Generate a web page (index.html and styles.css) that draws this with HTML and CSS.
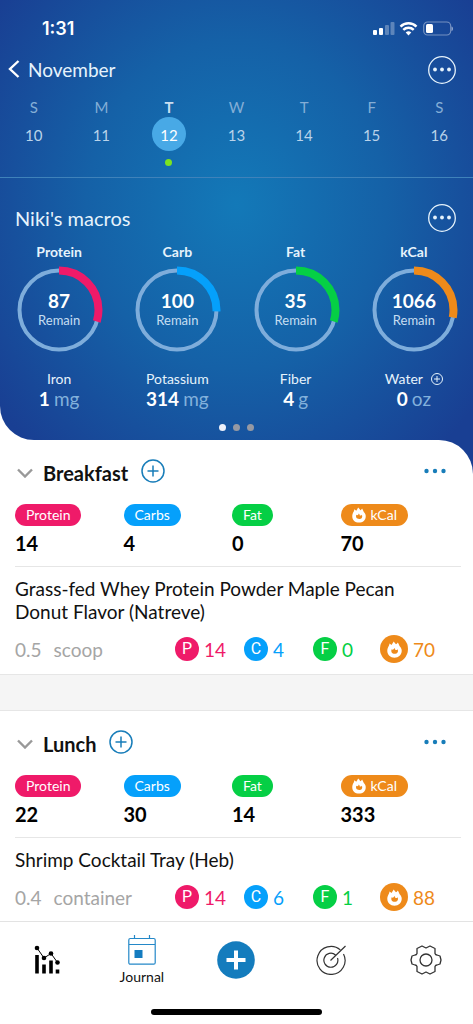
FILE: index.html
```html
<!DOCTYPE html>
<html lang="en">
<head>
<meta charset="utf-8">
<meta name="viewport" content="width=device-width, initial-scale=1">
<title>Journal</title>
<link rel="stylesheet" href="styles.css">
</head>
<body>
<svg class="defs" aria-hidden="true">
  <symbol id="flame" viewBox="0 0 16 18">
    <path fill="currentColor" d="M7 .5C8 1.500 9 2.500 9.500 3.500C10.500 3 11 2.500 11.500 1.500C12.500 3 13 4.500 13.500 5.500C15 7 15.700 8.500 15.700 10.300C15.700 14.700 12.400 17.700 8 17.700S.3 14.700 .3 10.300C.3 8.500 1 6.500 2 5C2.500 4 2.600 3.500 2.500 2.500C3.500 3 4.300 3.500 4.800 4.200C5.500 3 6.500 2 7 .5Z"/>
    <path class="flame-core" d="M5 8.800C6.200 9.600 7.300 9 7.700 7.300C8.600 8 9 8.700 8.900 9.500C9.800 9.700 10.700 9.400 11.300 8.600C12.500 11.500 10.800 13.600 8.200 13.600C5.200 13.600 3.900 11.300 5 8.800Z"/>
  </symbol>
  <symbol id="more" viewBox="0 0 28 28">
    <circle cx="14" cy="14" r="13.300" fill="none" stroke="currentColor" stroke-width="1.300"/>
    <circle cx="7" cy="13.500" r="1.900" fill="currentColor"/><circle cx="14" cy="13.500" r="1.900" fill="currentColor"/><circle cx="21" cy="13.500" r="1.900" fill="currentColor"/>
  </symbol>
  <symbol id="plus" viewBox="0 0 24 24">
    <path d="M12 6.500v11M6.500 12h11" fill="none" stroke="currentColor" stroke-width="1.500"/>
    <circle cx="12" cy="12" r="11" fill="none" stroke="currentColor" stroke-width="1.500"/>
  </symbol>
  <symbol id="dots" viewBox="0 0 22 6">
    <circle cx="2.500" cy="3" r="2.200" fill="currentColor"/><circle cx="11" cy="3" r="2.200" fill="currentColor"/><circle cx="19.500" cy="3" r="2.200" fill="currentColor"/>
  </symbol>
  <symbol id="chevron" viewBox="0 0 16 10">
    <path d="M1 1.500l7 7 7-7" fill="none" stroke="currentColor" stroke-width="2.400"/>
  </symbol>
</svg>

<div class="app">
  <header class="hero">
    <div class="status">
      <span class="time">1:31</span>
      <svg class="signals" viewBox="0 0 82 16" aria-hidden="true">
        <g fill="#fff">
          <rect x="0" y="9" width="4" height="5" rx="1"/><rect x="6" y="7" width="4" height="7" rx="1"/>
          <rect x="12" y="4" width="4" height="10" rx="1" opacity=".3"/><rect x="17.500" y="1" width="4" height="13" rx="1" opacity=".3"/>
          <path d="M35.500 14.500l-2.800-3a4.200 4.200 0 0 1 5.600 0z"/>
          <rect x="53" y="3" width="7" height="9" rx="1.500"/>
          <path d="M78.500 5.500c2 .5 2 4 0 4.500z" opacity=".5"/>
        </g>
        <g fill="none" stroke="#fff" stroke-width="2.500">
          <path d="M27.500 5.600a11.500 11.500 0 0 1 16 0M30.300 8.900a7.500 7.500 0 0 1 10.400 0"/>
          <rect x="50.700" y="1" width="27" height="13" rx="4" stroke-width="1.200" opacity=".4"/>
        </g>
      </svg>
    </div>
    <div class="month">
      <button class="icon-btn back" aria-label="Back"><svg width="12" height="20" viewBox="0 0 12 20"><path d="M10.500 1L2 9l8.500 8" fill="none" stroke="currentColor" stroke-width="2.400"/></svg></button>
      <h1 class="month-name">November</h1>
      <button class="icon-btn more" aria-label="More"><svg width="28" height="28"><use href="#more"/></svg></button>
    </div>
    <div class="week">
      <button class="day"><span class="dow">S</span><span class="num">10</span></button>
      <button class="day"><span class="dow">M</span><span class="num">11</span></button>
      <button class="day today"><span class="dow">T</span><span class="num">12</span></button>
      <button class="day"><span class="dow">W</span><span class="num">13</span></button>
      <button class="day"><span class="dow">T</span><span class="num">14</span></button>
      <button class="day"><span class="dow">F</span><span class="num">15</span></button>
      <button class="day"><span class="dow">S</span><span class="num">16</span></button>
    </div>
    <div class="macros-head">
      <h2 class="title">Niki's macros</h2>
      <button class="icon-btn more" aria-label="Macro options"><svg width="28" height="28"><use href="#more"/></svg></button>
    </div>
    <div class="macros">
      <div class="macro protein"><h3>Protein</h3>
        <div class="ring"><svg viewBox="0 0 88 88"><circle class="track" cx="44" cy="44" r="39.500"/><circle class="arc" cx="44" cy="44" r="39.500" pathLength="360" stroke-dasharray="107 360"/></svg><strong>87</strong><span>Remain</span></div>
        <div class="extra">Iron</div><div class="amount"><b>1</b><span>mg</span></div></div>
      <div class="macro carb"><h3>Carb</h3>
        <div class="ring"><svg viewBox="0 0 88 88"><circle class="track" cx="44" cy="44" r="39.500"/><circle class="arc" cx="44" cy="44" r="39.500" pathLength="360" stroke-dasharray="92 360"/></svg><strong>100</strong><span>Remain</span></div>
        <div class="extra">Potassium</div><div class="amount"><b>314</b><span>mg</span></div></div>
      <div class="macro fat"><h3>Fat</h3>
        <div class="ring"><svg viewBox="0 0 88 88"><circle class="track" cx="44" cy="44" r="39.500"/><circle class="arc" cx="44" cy="44" r="39.500" pathLength="360" stroke-dasharray="107 360"/></svg><strong>35</strong><span>Remain</span></div>
        <div class="extra">Fiber</div><div class="amount"><b>4</b><span>g</span></div></div>
      <div class="macro kcal"><h3>kCal</h3>
        <div class="ring"><svg viewBox="0 0 88 88"><circle class="track" cx="44" cy="44" r="39.500"/><circle class="arc" cx="44" cy="44" r="39.500" pathLength="360" stroke-dasharray="101 360"/></svg><strong>1066</strong><span>Remain</span></div>
        <div class="extra">Water <button class="icon-btn" aria-label="Add water"><svg width="12" height="12" viewBox="0 0 12 12"><g fill="none" stroke="currentColor" stroke-width="1"><circle cx="6" cy="6" r="5.500"/><path d="M6 3v6M3 6h6"/></g></svg></button></div><div class="amount"><b>0</b><span>oz</span></div></div>
    </div>
    <div class="pager"><i class="on"></i><i></i><i></i></div>
  </header>

  <main class="meals">
    <section class="meal">
      <div class="meal-head">
        <button class="icon-btn fold" aria-label="Collapse"><svg width="16" height="10"><use href="#chevron"/></svg></button>
        <h2>Breakfast</h2>
        <button class="icon-btn add" aria-label="Add to breakfast"><svg width="24" height="24"><use href="#plus"/></svg></button>
        <button class="icon-btn dots" aria-label="Breakfast options"><svg width="22" height="6"><use href="#dots"/></svg></button>
      </div>
      <div class="totals">
        <div class="protein"><span class="pill">Protein</span><b>14</b></div>
        <div class="carb"><span class="pill">Carbs</span><b>4</b></div>
        <div class="fat"><span class="pill">Fat</span><b>0</b></div>
        <div class="kcal"><span class="pill"><svg width="14" height="16"><use href="#flame"/></svg>kCal</span><b>70</b></div>
      </div>
      <h3 class="food">Grass-fed Whey Protein Powder Maple Pecan Donut Flavor (Natreve)</h3>
      <div class="facts">
        <span class="serving"><span>0.5</span><span>scoop</span></span>
        <span class="fact protein"><i>P</i>14</span>
        <span class="fact carb"><i>C</i>4</span>
        <span class="fact fat"><i>F</i>0</span>
        <span class="fact kcal"><i><svg width="15" height="17"><use href="#flame"/></svg></i>70</span>
      </div>
    </section>
    <div class="gap"></div>
    <section class="meal">
      <div class="meal-head">
        <button class="icon-btn fold" aria-label="Collapse"><svg width="16" height="10"><use href="#chevron"/></svg></button>
        <h2>Lunch</h2>
        <button class="icon-btn add" aria-label="Add to lunch"><svg width="24" height="24"><use href="#plus"/></svg></button>
        <button class="icon-btn dots" aria-label="Lunch options"><svg width="22" height="6"><use href="#dots"/></svg></button>
      </div>
      <div class="totals">
        <div class="protein"><span class="pill">Protein</span><b>22</b></div>
        <div class="carb"><span class="pill">Carbs</span><b>30</b></div>
        <div class="fat"><span class="pill">Fat</span><b>14</b></div>
        <div class="kcal"><span class="pill"><svg width="14" height="16"><use href="#flame"/></svg>kCal</span><b>333</b></div>
      </div>
      <h3 class="food">Shrimp Cocktail Tray (Heb)</h3>
      <div class="facts">
        <span class="serving"><span>0.4</span><span>container</span></span>
        <span class="fact protein"><i>P</i>14</span>
        <span class="fact carb"><i>C</i>6</span>
        <span class="fact fat"><i>F</i>1</span>
        <span class="fact kcal"><i><svg width="15" height="17"><use href="#flame"/></svg></i>88</span>
      </div>
    </section>
  </main>

  <nav class="tabs">
    <div class="tab-row">
      <button class="tab" aria-label="Trends"><svg width="28" height="30" viewBox="0 0 28 30">
        <path d="M4 10v18.500M11 19.500v9M18 15.500v13M24.500 24.500v4" stroke="#000" stroke-width="3.600"/>
        <path d="M4 3l7 10 7-4.500 6.500 9" fill="none" stroke="#000" stroke-width="1"/>
        <circle cx="4" cy="3" r="2.300"/><circle cx="11" cy="13" r="2.300"/><circle cx="18" cy="8.500" r="2.300"/><circle cx="24.500" cy="17.500" r="2.300"/></svg></button>
      <button class="tab"><svg width="28" height="30" viewBox="0 0 28 30">
        <g fill="none" stroke="#2488c8" stroke-width="1.200"><rect x=".8" y="3.500" width="26.400" height="25.700" rx="1.500"/><path d="M1 9.500h26M6.500 0v3.500M21.500 0v3.500"/></g>
        <rect x="6.500" y="15" width="8" height="8" fill="#147cc0"/></svg>Journal</button>
      <button class="tab" aria-label="Add"><svg width="38" height="38" viewBox="0 0 38 38"><circle cx="19" cy="19" r="18.800" fill="#147cbd"/><path d="M19 9.500v19M9.500 19h19" stroke="#fff" stroke-width="4"/></svg></button>
      <button class="tab" aria-label="Goals"><svg width="30" height="30" viewBox="0 0 30 30"><g fill="none" stroke="#333" stroke-width="1.200">
        <path d="M24.300 4.900A14 14 0 1 0 27.500 9M19.500 10A7 7 0 1 0 21.500 13M14.500 15.500L29.500 1"/></g></svg></button>
      <button class="tab" aria-label="Settings"><svg width="32" height="30" viewBox="0 0 32 30"><g fill="none" stroke="#333" stroke-width="1.300" stroke-linejoin="round">
        <circle cx="16" cy="15" r="6"/>
        <path d="M12 1L16 3 20 1 25 3.500V8.500Q25.500 10 27 10L30 11 31 15 30 19 27 20Q25.500 20 25 21.500V26.500L20 29 16 27 12 29 7 26.500V21.500Q6.500 20 5 20L2 19 1 15 2 11 5 10Q6.500 10 7 8.500V3.500Z"/></g></svg></button>
    </div>
    <div class="home-bar"></div>
  </nav>
</div>
</body>
</html>
```
FILE: styles.css
```css
* { box-sizing: border-box; }

body {
  margin: 0;
  font-family: Lato, "Liberation Sans", sans-serif;
  color: #111;
  background: #fff;
}

h1, h2, h3 { margin: 0; font-weight: 400; }
button { font: inherit; color: inherit; background: none; border: 0; padding: 0; }
svg { display: block; }
.defs { width: 0; height: 0; position: absolute; }
.icon-btn { display: block; line-height: 0; }

.protein { --tone: #ef1a69; }
.carb { --tone: #05a0fb; }
.fat { --tone: #05cf45; }
.kcal { --tone: #ee8a1a; }

.app {
  min-height: 100vh;
  display: flex;
  flex-direction: column;
}

/* Header */
.hero {
  color: #e6f3fc;
  background: radial-gradient(ellipse 300px 330px at 50% 205px, #1379b8 0%, #1561a7 50%, #193f93 100%);
  border-bottom-left-radius: 34px;
}

.status {
  height: 50px;
  padding: 7px 18px 0 42px;
  display: flex;
  align-items: center;
  justify-content: space-between;
}
.time { font-family: Inter, sans-serif; font-size: 18px; font-weight: 600; color: #fff; }
.signals { width: 82px; height: 16px; }

.month {
  height: 40px;
  padding: 0 17px 0 8px;
  display: flex;
  align-items: center;
}
.month-name { font-size: 19px; line-height: 24px; }
.title { font-size: 20px; line-height: 24px; }
.back { color: #fff; margin-right: 8px; }
.more { margin-left: auto; }

.week {
  height: 88px;
  padding-top: 7px;
  display: grid;
  grid-template-columns: repeat(7, 1fr);
  border-bottom: 1px solid #3f82ba;
}
.day {
  display: flex;
  flex-direction: column;
  align-items: center;
  font-size: 15px;
  color: #b9d3ea;
}
.dow { line-height: 20px; color: #84aed6; }
.num {
  width: 34px;
  height: 34px;
  line-height: 36px;
  border-radius: 50%;
}
.today .dow { color: #c9def0; font-weight: 700; }
.today .num { background: #48a9e6; color: #fff; }
.today::after {
  content: "";
  width: 7px;
  height: 7px;
  margin-top: 8px;
  border-radius: 50%;
  background: #7be321;
}

.macros-head {
  height: 64px;
  padding: 16px 17px 0 15px;
  display: flex;
  align-items: center;
}

.macros {
  display: grid;
  grid-template-columns: repeat(4, 1fr);
  text-align: center;
}
.macro h3 { font-size: 14px; line-height: 20px; font-weight: 700; }
.ring {
  width: 88px;
  height: 88px;
  margin: 4px auto 0;
  padding-top: 24px;
  display: grid;
  align-content: start;
  position: relative;
}
.ring svg { position: absolute; inset: 0; transform: rotate(-90deg); }
.ring circle { fill: none; }
.track { stroke: #7eaddb; stroke-width: 4; }
.arc { stroke: var(--tone); stroke-width: 8; }
.ring strong { font-size: 19px; line-height: 22px; color: #fff; }
.ring span { font-size: 13px; line-height: 16px; color: #c6def2; }
.extra {
  margin-top: 15px;
  display: flex;
  justify-content: center;
  align-items: center;
  gap: 8px;
  font-size: 14px;
  line-height: 20px;
}
.amount {
  display: flex;
  justify-content: center;
  gap: 4px;
  font-size: 19px;
  line-height: 20px;
  color: #82b1dc;
}
.amount b { color: #fff; }

.pager { display: flex; justify-content: center; gap: 7px; padding: 15px 0 9px; }
.pager i { width: 7px; height: 7px; border-radius: 50%; background: #9699a3; }
.pager .on { background: #edf1fb; }

/* Meals */
.meals {
  flex: 1;
  background: linear-gradient(to right, #fff 50%, #193f93 50%) top / 100% 60px no-repeat;
}
.meal {
  padding: 15px 12px 11px 15px;
  background: #fff;
}
.meal:first-child { border-top-right-radius: 34px; }
.meal:last-child { padding-bottom: 10px; }
.gap {
  height: 37px;
  background: #f5f5f5;
  border: solid #e6e6e6;
  border-width: 1px 0;
}
.meal-head {
  height: 36px;
  padding: 0 15px 0 2px;
  display: flex;
  align-items: center;
}
.meal-head h2 { font-size: 20px; line-height: 24px; font-weight: 700; margin: 0 13px 0 10px; }
.fold { color: #999; }
.add, .dots { color: #187db9; padding-bottom: 5px; }
.dots { margin-left: auto; }

.totals {
  padding: 13px 12px 0 0;
  display: grid;
  grid-template-columns: repeat(4, 1fr);
  height: 76px;
  border-bottom: 1px solid #e6e6e6;
}
.totals b { display: block; font-size: 20px; line-height: 24px; margin-top: 5px; color: #000; }
.pill {
  display: inline-flex;
  align-items: center;
  gap: 5px;
  height: 22px;
  padding: 0 11px 1px;
  border-radius: 11px;
  background: var(--tone);
  color: #fff;
  font-size: 14px;
  vertical-align: top;
}
.flame-core { fill: #ee8a1a; }

.food { margin-top: 10px; padding-right: 32px; font-size: 19px; line-height: 23px; }
.facts {
  height: 28px;
  margin-top: 12px;
  display: grid;
  grid-template-columns: 1fr 69px 69px 67px 81px;
  align-items: center;
  font-size: 19px;
}
.serving { display: flex; gap: 12px; color: #a5a5a5; }
.fact { display: flex; align-items: center; gap: 5px; color: var(--tone); }
.fact i {
  width: 24px;
  height: 24px;
  display: grid;
  place-items: center;
  border-radius: 50%;
  background: var(--tone);
  color: #fff;
  font: 16px/24px Roboto, sans-serif;
}
.fact.kcal i { width: 28px; height: 28px; }

/* Tab bar */
.tabs { border-top: 1px solid #e3e3e3; background: #fff; padding-bottom: 9px; }
.tab-row { display: grid; grid-template-columns: repeat(5, 1fr); height: 76px; }
.tab {
  display: flex;
  flex-direction: column;
  align-items: center;
  justify-content: center;
  gap: 3px;
  font-size: 14px;
  line-height: 18px;
}
.home-bar { width: 36%; height: 6px; margin: 11px auto 0; border-radius: 3px; background: #000; }
```
